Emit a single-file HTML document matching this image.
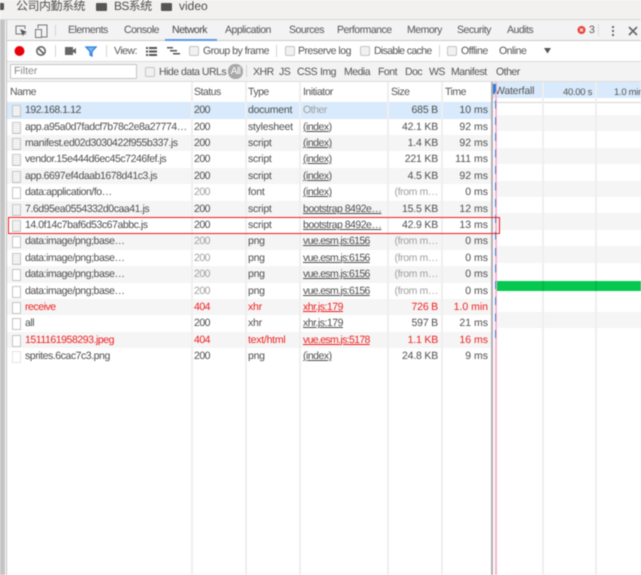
<!DOCTYPE html>
<html><head><meta charset="utf-8"><style>
html,body{margin:0;padding:0;background:#fff}
#p{position:relative;width:641px;height:575px;overflow:hidden;background:#fff;font:10.5px "Liberation Sans","Noto Sans CJK SC",sans-serif;color:#4e4e4e;filter:blur(.4px);text-rendering:geometricPrecision}
#p div,#p span,#p svg{position:absolute}
.t{white-space:nowrap;line-height:14px}
.h{height:20px;line-height:20px;white-space:nowrap;color:#555;letter-spacing:-.5px}
.v{top:82px;bottom:0;width:2px;background:#efefef}
.r{left:7px;width:485px;height:16.4px;line-height:16.4px;white-space:nowrap}
.r span{top:0;line-height:16.4px}
.g{background:#f5f5f5}
.n{left:18px;letter-spacing:-.45px}.s{left:187px;letter-spacing:-.5px}.y{left:241px;letter-spacing:-.25px}.i{left:296px;text-decoration:underline;letter-spacing:-.5px}
.z{right:54px;text-align:right;letter-spacing:-.2px}.m{right:4px;text-align:right}
.d{color:#a0a0a0}.e,.e span{color:#f01e1e}
.f{left:5px;top:3px;width:7px;height:10px;border:1px solid #c4c4c4;background:#fff}
.l{background:repeating-linear-gradient(#fff 0 1px,#e2e2e2 1px 2px)}
.c{width:8px;height:8px;border:1px solid #c4c4c4;border-radius:2px;background:#f1f1f1}
.sp{width:1px;background:#d4d4d4}
.w{left:496px;width:145px;height:16.4px;background:#f5f5f5}
</style></head><body><div id="p">
<div style="left:0;top:0;width:641px;height:19px;background:#f2f1f0"></div>
<div style="left:0;top:19px;width:641px;height:1px;background:#d8d6d3"></div>
<div style="left:-3px;top:3px;width:7px;height:7px;background:#555;border-radius:1px"></div>
<div class="t" style="left:16px;top:-2px;font-size:12px;line-height:16px;letter-spacing:-.5px">公司内勤系统</div>
<div style="left:96px;top:3px;width:11px;height:8px;background:#555;border-radius:1px"></div>
<div class="t" style="left:114px;top:-2px;font-size:12px;line-height:16px;letter-spacing:-.6px">BS系统</div>
<div style="left:161px;top:3px;width:11px;height:8px;background:#555;border-radius:1px"></div>
<div class="t" style="left:179px;top:-2px;font-size:12px;line-height:16px">video</div>

<div style="left:0;top:20px;width:5px;height:555px;background:#c4c4c4"></div>
<div style="left:6px;top:20px;width:1px;height:555px;background:#c0c0c0"></div>

<div style="left:7px;top:20px;width:634px;height:20px;background:#f3f3f3"></div>
<div style="left:7px;top:40px;width:634px;height:1px;background:#ccc"></div>
<div style="left:7px;top:41px;width:634px;height:20px;background:#fff"></div>
<div style="left:7px;top:61px;width:634px;height:1px;background:#ddd"></div>
<div style="left:7px;top:62px;width:634px;height:19px;background:#f3f3f3"></div>
<div style="left:7px;top:81px;width:634px;height:1px;background:#ddd"></div>
<div style="left:7px;top:101.500px;width:634px;height:1px;background:#d5d5d5"></div>

<svg style="left:14px;top:24px" width="36" height="14" viewBox="0 0 36 14" fill="none"><path d="M12 10H2V2h9v3" stroke="#777"/><path d="M6 5l7 3-3 1.200-1 3z" fill="#555"/><path d="M24 4V1h9v12h-5" stroke="#777"/><rect x="21.500" y="5.500" width="6" height="8" stroke="#777"/></svg>
<div class="sp" style="left:55px;top:25px;height:11px"></div>
<div class="h" style="left:68px;top:20px">Elements</div>
<div class="h" style="left:124px;top:20px">Console</div>
<div class="h" style="left:172px;top:20px;color:#444">Network</div>
<div style="left:165px;top:39px;width:52px;height:2px;background:#5b9be6"></div>
<div class="h" style="left:225px;top:20px">Application</div>
<div class="h" style="left:289px;top:20px">Sources</div>
<div class="h" style="left:337px;top:20px">Performance</div>
<div class="h" style="left:407px;top:20px">Memory</div>
<div class="h" style="left:457px;top:20px">Security</div>
<div class="h" style="left:507px;top:20px">Audits</div>
<svg style="left:577px;top:25px" width="9" height="10" viewBox="0 0 9 10"><circle cx="4.500" cy="5" r="4" fill="#e8413a"/><path d="M3 3.500l3 3m0-3l-3 3" stroke="#fff"/></svg>
<div class="h" style="left:589px;top:20px">3</div>
<div class="sp" style="left:598px;top:24px;height:12px;background:#ddd"></div>
<svg style="left:611px;top:24px" width="30" height="14" viewBox="0 0 30 14"><g fill="#666"><rect x="1" y="2" width="2" height="2"/><rect x="1" y="6" width="2" height="2"/><rect x="1" y="10" width="2" height="2"/></g><path d="M18 3l8 8m0-8l-8 8" stroke="#666" stroke-width="1.600"/></svg>

<svg style="left:12px;top:44px" width="36" height="14" viewBox="0 0 36 14"><circle cx="7.500" cy="7" r="5" fill="#e8000b"/><circle cx="29" cy="7" r="4.200" fill="none" stroke="#666" stroke-width="1.600"/><path d="M26 4l6 6" stroke="#666" stroke-width="1.600"/></svg>
<div class="sp" style="left:55px;top:45px;height:12px"></div>
<svg style="left:64px;top:45px" width="36" height="13" viewBox="0 0 36 13"><rect x="1" y="2" width="8" height="8" fill="#666"/><path d="M9 5l3-2v6l-3-2z" fill="#666"/><path d="M22 2h10l-4 4.500V11l-2-1V6.500z" fill="#7fb5ee" stroke="#2f82dc" stroke-width="1.300"/></svg>
<div class="sp" style="left:106px;top:45px;height:12px"></div>
<div class="h" style="left:114px;top:41px">View:</div>
<svg style="left:146px;top:46px" width="36" height="11" viewBox="0 0 36 11"><g fill="#555"><rect y="1" width="2" height="2"/><rect x="3" y="1" width="8" height="2"/><rect y="4.500" width="2" height="2"/><rect x="3" y="4.500" width="8" height="2"/><rect y="8" width="2" height="2"/><rect x="3" y="8" width="8" height="2"/><rect x="21" y="1" width="6" height="1.500"/><rect x="24" y="4" width="7" height="1.500"/><rect x="27" y="7" width="7" height="1.500"/></g></svg>
<div class="c" style="left:189px;top:46px"></div>
<div class="h" style="left:203px;top:41px">Group by frame</div>
<div class="sp" style="left:276px;top:45px;height:12px"></div>
<div class="c" style="left:285px;top:46px"></div>
<div class="h" style="left:298px;top:41px">Preserve log</div>
<div class="c" style="left:360px;top:46px"></div>
<div class="h" style="left:374px;top:41px;letter-spacing:-.65px">Disable cache</div>
<div class="sp" style="left:439px;top:45px;height:12px"></div>
<div class="c" style="left:447px;top:46px"></div>
<div class="h" style="left:461px;top:41px">Offline</div>
<div class="h" style="left:499px;top:41px">Online</div>
<svg style="left:544px;top:48px" width="8" height="6" viewBox="0 0 8 6"><path d="M0 0h7l-3.500 5.500z" fill="#555"/></svg>

<div style="left:10px;top:64px;width:125px;height:13px;background:#fff;border:1px solid #c4c4c4;border-radius:1px"></div>
<div class="t" style="left:14px;top:64px;color:#888">Filter</div>
<div class="c" style="left:145px;top:67px"></div>
<div class="h" style="left:159px;top:62px">Hide data URLs</div>
<div style="left:228px;top:64px;width:15px;height:15px;border-radius:7px;background:#a8a8a8;color:#fff;text-align:center;line-height:15px;font-size:10px;letter-spacing:-.5px">All</div>
<div class="sp" style="left:246px;top:65px;height:12px"></div>
<div class="h" style="left:253px;top:62px">XHR</div>
<div class="h" style="left:279px;top:62px">JS</div>
<div class="h" style="left:297px;top:62px">CSS</div>
<div class="h" style="left:320px;top:62px">Img</div>
<div class="h" style="left:344px;top:62px">Media</div>
<div class="h" style="left:378px;top:62px">Font</div>
<div class="h" style="left:405px;top:62px">Doc</div>
<div class="h" style="left:429px;top:62px">WS</div>
<div class="h" style="left:451px;top:62px">Manifest</div>
<div class="h" style="left:496px;top:62px">Other</div>

<div style="left:493px;top:82px;width:148px;height:16px;background:#d8eafb"></div>
<div class="h" style="left:10px;top:82px">Name</div>
<div class="h" style="left:194px;top:82px">Status</div>
<div class="h" style="left:248px;top:82px">Type</div>
<div class="h" style="left:303px;top:82px">Initiator</div>
<div class="h" style="left:391px;top:82px">Size</div>
<div class="h" style="left:445px;top:82px">Time</div>
<div class="h" style="left:495px;top:81px;letter-spacing:-.2px">Waterfall</div>
<div class="h" style="left:563px;top:83px;font-size:9.5px;letter-spacing:-.3px">40.00 s</div>
<div class="h" style="left:614px;top:83px;font-size:9.5px;letter-spacing:-.3px">1.0 min</div>

<div class="w" style="top:115px"></div><div class="w" style="top:147.800px"></div><div class="w" style="top:180.600px"></div><div class="w" style="top:213.400px"></div><div class="w" style="top:246.200px"></div><div class="w" style="top:311.800px"></div>

<div class="r" style="top:102.200px;background:#d8eafb"><div class="f l"></div><span class="n">192.168.1.12</span><span class="s">200</span><span class="y">document</span><span class="i d" style="text-decoration:none">Other</span><span class="z">685 B</span><span class="m">10 ms</span></div>
<div class="r" style="top:118.600px"><div class="f l"></div><span class="n">app.a95a0d7fadcf7b78c2e8a27774…</span><span class="s">200</span><span class="y">stylesheet</span><span class="i">(index)</span><span class="z">42.1 KB</span><span class="m">92 ms</span></div>
<div class="r g" style="top:135px"><div class="f l"></div><span class="n">manifest.ed02d3030422f955b337.js</span><span class="s">200</span><span class="y">script</span><span class="i">(index)</span><span class="z">1.4 KB</span><span class="m">92 ms</span></div>
<div class="r" style="top:151.400px"><div class="f l"></div><span class="n">vendor.15e444d6ec45c7246fef.js</span><span class="s">200</span><span class="y">script</span><span class="i">(index)</span><span class="z">221 KB</span><span class="m">111 ms</span></div>
<div class="r g" style="top:167.800px"><div class="f l"></div><span class="n">app.6697ef4daab1678d41c3.js</span><span class="s">200</span><span class="y">script</span><span class="i">(index)</span><span class="z">4.5 KB</span><span class="m">92 ms</span></div>
<div class="r" style="top:184.200px"><div class="f"></div><span class="n">data:application/fo…</span><span class="s d">200</span><span class="y">font</span><span class="i">(index)</span><span class="z d" style="letter-spacing:-.4px">(from m…</span><span class="m">0 ms</span></div>
<div class="r g" style="top:200.600px"><div class="f l"></div><span class="n">7.6d95ea0554332d0caa41.js</span><span class="s">200</span><span class="y">script</span><span class="i">bootstrap 8492e…</span><span class="z">15.5 KB</span><span class="m">12 ms</span></div>
<div class="r" style="top:217px"><div class="f l"></div><span class="n">14.0f14c7baf6d53c67abbc.js</span><span class="s">200</span><span class="y">script</span><span class="i">bootstrap 8492e…</span><span class="z">42.9 KB</span><span class="m">13 ms</span></div>
<div class="r g" style="top:233.400px"><div class="f"></div><span class="n">data:image/png;base…</span><span class="s d">200</span><span class="y">png</span><span class="i" style="letter-spacing:-.65px">vue.esm.js:6156</span><span class="z d" style="letter-spacing:-.4px">(from m…</span><span class="m">0 ms</span></div>
<div class="r" style="top:249.800px"><div class="f l"></div><span class="n">data:image/png;base…</span><span class="s d">200</span><span class="y">png</span><span class="i" style="letter-spacing:-.65px">vue.esm.js:6156</span><span class="z d" style="letter-spacing:-.4px">(from m…</span><span class="m">0 ms</span></div>
<div class="r g" style="top:266.200px"><div class="f"></div><span class="n">data:image/png;base…</span><span class="s d">200</span><span class="y">png</span><span class="i" style="letter-spacing:-.65px">vue.esm.js:6156</span><span class="z d" style="letter-spacing:-.4px">(from m…</span><span class="m">0 ms</span></div>
<div class="r" style="top:282.600px"><div class="f"></div><span class="n">data:image/png;base…</span><span class="s d">200</span><span class="y">png</span><span class="i" style="letter-spacing:-.65px">vue.esm.js:6156</span><span class="z d" style="letter-spacing:-.4px">(from m…</span><span class="m">0 ms</span></div>
<div class="r g e" style="top:299px"><div class="f"></div><span class="n">receive</span><span class="s">404</span><span class="y">xhr</span><span class="i">xhr.js:179</span><span class="z">726 B</span><span class="m">1.0 min</span></div>
<div class="r" style="top:315.400px"><div class="f"></div><span class="n">all</span><span class="s">200</span><span class="y">xhr</span><span class="i">xhr.js:179</span><span class="z">597 B</span><span class="m">21 ms</span></div>
<div class="r g e" style="top:331.800px"><div class="f"></div><span class="n">1511161958293.jpeg</span><span class="s">404</span><span class="y">text/html</span><span class="i" style="letter-spacing:-.65px">vue.esm.js:5178</span><span class="z">1.1 KB</span><span class="m">16 ms</span></div>
<div class="r" style="top:348.200px"><div class="f" style="border-color:#e4e4e4"></div><span class="n">sprites.6cac7c3.png</span><span class="s">200</span><span class="y">png</span><span class="i">(index)</span><span class="z">24.8 KB</span><span class="m">9 ms</span></div>

<div class="v" style="left:191px"></div><div class="v" style="left:245px"></div><div class="v" style="left:299px"></div><div class="v" style="left:387px"></div><div class="v" style="left:441px"></div>
<div class="v" style="left:542px"></div><div class="v" style="left:595px"></div>
<div style="left:497px;top:281px;width:144px;height:10px;background:#05c851"></div>
<div style="left:542px;top:281px;width:2px;height:10px;background:#05b84a"></div>
<div style="left:595px;top:281px;width:2px;height:10px;background:#05b84a"></div>
<div style="left:491px;top:82px;width:2px;bottom:0;background:#b0b0b0"></div>
<div style="left:495px;top:82px;width:2px;bottom:0;background:#f7b4d0"></div>
<div style="left:495px;top:84px;width:1px;height:262px;background:repeating-linear-gradient(#3c78d8 0 8px,transparent 8px 16.400px)"></div>
<div style="left:493px;top:84px;width:2px;height:10px;background:#2a7fd5"></div>
<div style="left:8px;top:217px;width:490px;height:15px;border:1px solid #ee1c1c"></div>
</div></body></html>
